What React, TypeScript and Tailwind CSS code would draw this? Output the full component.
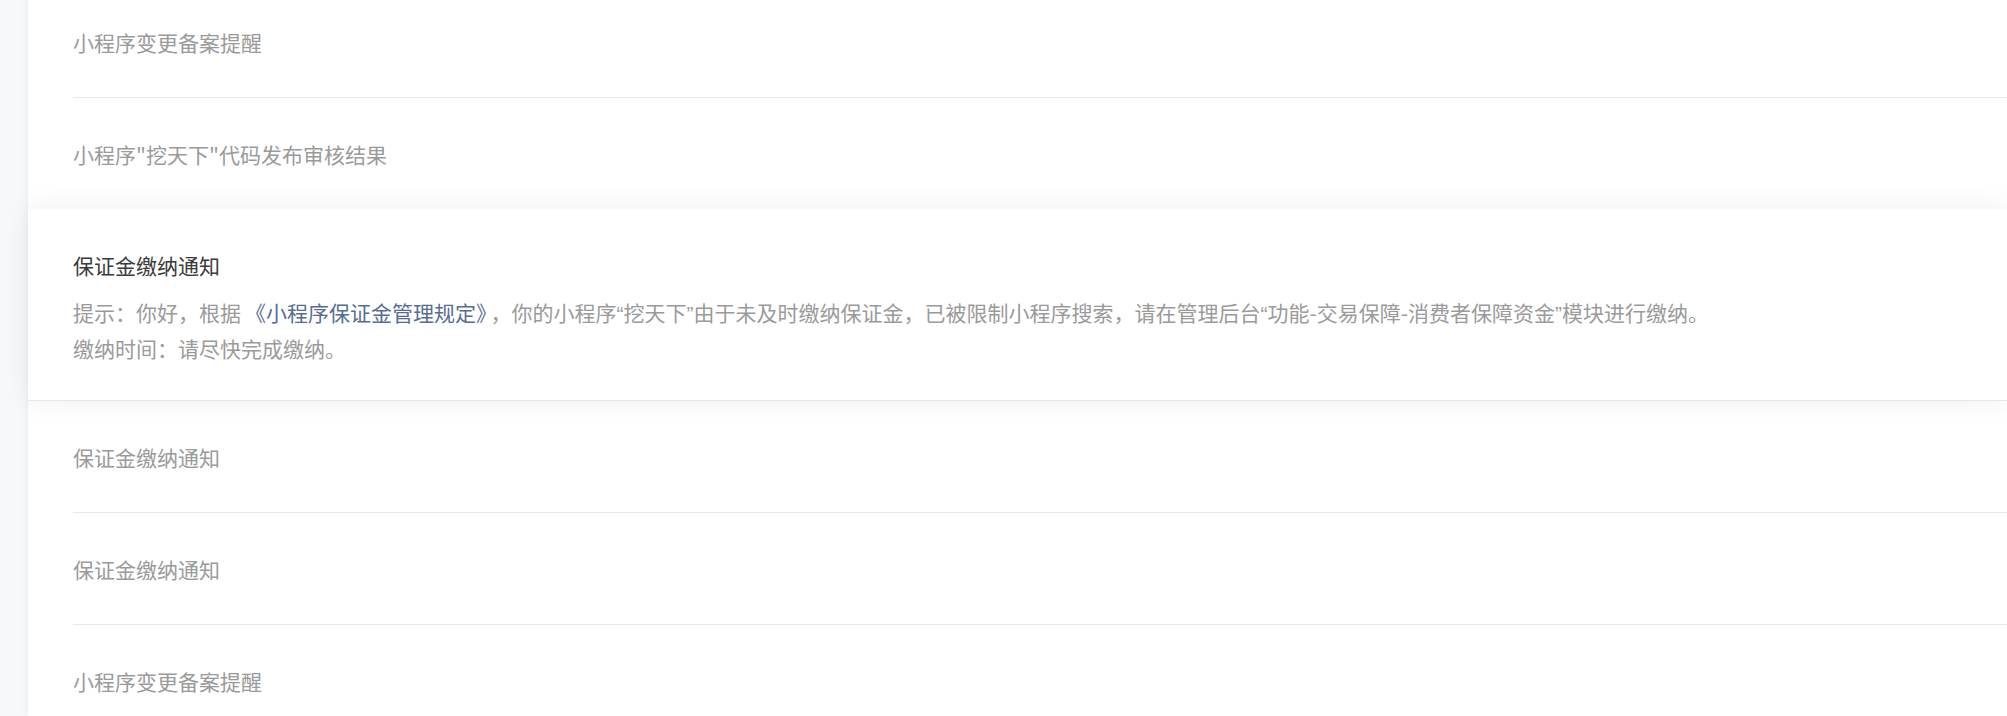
import React from "react";

const font = { fontFamily: '"Microsoft YaHei", "Noto Sans CJK SC", "Noto Sans", sans-serif' };

type Item = { title: string; active?: boolean };

const items: Item[] = [
  { title: "小程序变更备案提醒" },
  { title: '小程序"挖天下"代码发布审核结果' },
  { title: "保证金缴纳通知", active: true },
  { title: "保证金缴纳通知" },
  { title: "保证金缴纳通知" },
  { title: "小程序变更备案提醒" },
];

// narrow latin quotes, as in the original page
function Q({ children }: { children: React.ReactNode }) {
  return <span className="font-['Liberation_Sans']">{children}</span>;
}

function Row({ title }: { title: string }) {
  return (
    <div className="pl-[45px]">
      <div className="h-[112px] flex items-center border-b border-[#e9e9eb] text-[21px] leading-[30px] text-[#9a9a9a]">
        {title}
      </div>
    </div>
  );
}

function ActiveCard({ title }: { title: string }) {
  return (
    <div className="relative z-10 -mt-px h-[192px] bg-white pl-[45px] pt-[41px] shadow-[0_0_28px_rgba(0,0,0,0.07)] border-b border-[#e6e7ea]">
      <div className="text-[21px] leading-[30px] text-[#3a3a3a]">{title}</div>
      <div className="mt-[15px] text-[21px] leading-[34px] text-[#9a9a9a]">
        <p>
          提示：你好，根据
          <a href="#" className="mx-[4px] text-[#576b95]">《小程序保证金管理规定》</a>
          ，你的小程序<Q>“</Q>挖天下<Q>”</Q>由于未及时缴纳保证金，已被限制小程序搜索，请在管理后台
          <Q>“</Q>功能-交易保障-消费者保障资金<Q>”</Q>模块进行缴纳。
        </p>
        <p>缴纳时间：请尽快完成缴纳。</p>
      </div>
    </div>
  );
}

export default function App() {
  return (
    <div className="flex h-[716px] w-full overflow-hidden bg-[#f7f8fa]" style={font}>
      <div className="w-[28px] shrink-0" />
      <div className="flex-1 bg-white -mt-[14px] shadow-[-3px_0_6px_rgba(0,0,0,0.03)]">
        {items.map((it, i) =>
          it.active ? <ActiveCard key={i} title={it.title} /> : <Row key={i} title={it.title} />
        )}
      </div>
    </div>
  );
}
